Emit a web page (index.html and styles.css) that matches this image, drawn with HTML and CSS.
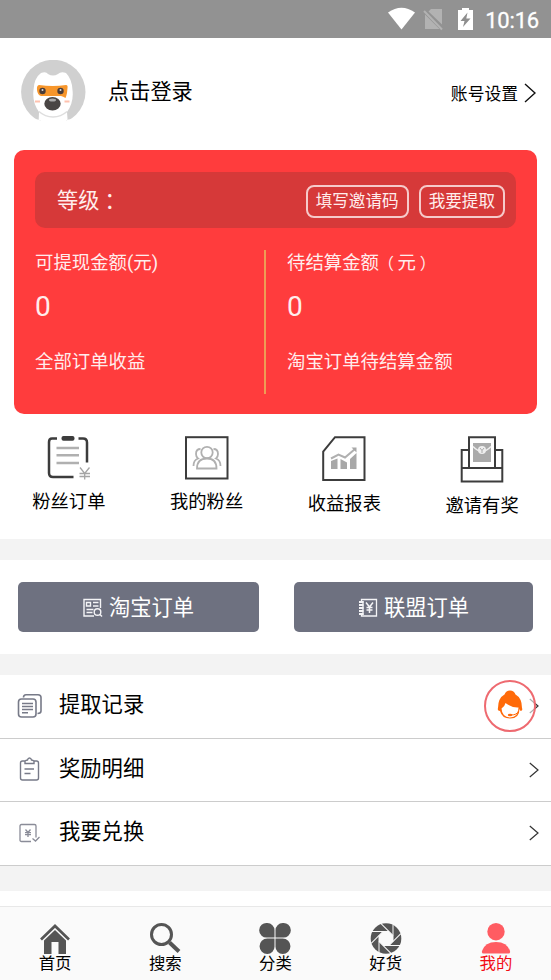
FILE: index.html
```html
<!DOCTYPE html>
<html lang="zh-CN">
<head>
<meta charset="utf-8">
<meta name="viewport" content="width=device-width, initial-scale=1">
<title>我的</title>
<link rel="stylesheet" href="styles.css">
</head>
<body>
<div class="app">
  <header class="status">
    <svg class="status-icons" width="92" height="26" viewBox="0 0 92 26">
      <path d="M1 6.500Q14.500-3 28 6.500L14.500 23.500Z" fill="#fff"/>
      <path d="M44 3h11v15.500L41.500 5.500zM38 8.500L52.500 23H38z" fill="#b2b2b2"/>
      <path d="M37 5L55 23.500" stroke="#b2b2b2" stroke-width="2"/>
      <path d="M71 4h4V2h7v2h4v20H71z" fill="#fff"/>
      <path d="M80.500 6.500L73.500 15h4L76 21l7.500-8.500h-4.200z" fill="#8e8e8e"/>
    </svg>
    <span class="clock">10:16</span>
  </header>

  <section class="profile">
    <svg class="avatar" width="65" height="65" viewBox="0 0 65 65">
      <clipPath id="disc"><path d="M0 0H65V59.500H47L45 61H20L17.500 59.500H0Z"/></clipPath>
      <g clip-path="url(#disc)">
        <circle cx="32.300" cy="32" r="32.200" fill="#d0d0d0"/>
        <path d="M18 52Q11 42 12.500 30Q13 18 20 13Q25 11 27 14Q32 17 37 14Q40 11 45 13Q51 19 51.500 30Q53 42 46 52L47 65H17.500Z" fill="#fff"/>
        <path d="M18 51.500Q24 57 32 57Q40 57 46 51.500" fill="none" stroke="#dedede" stroke-width="1.500"/>
      </g>
      <path d="M18 25Q32 27 45 25Q47 25 46.500 28L46 33Q45.500 35.500 44.500 38Q42 36.500 40 36H20Q16.500 35 16 30Q15.500 25.500 18 25Z" fill="#f7962b"/>
      <circle cx="21.500" cy="31" r="3.200" fill="#493c39"/><circle cx="39.500" cy="31" r="3.200" fill="#493c39"/>
      <circle cx="21.500" cy="30" r="1" fill="#ddd"/><circle cx="39.500" cy="30" r="1" fill="#ddd"/>
      <ellipse cx="31.500" cy="43.800" rx="8.200" ry="6.700" fill="#494544"/>
      <ellipse cx="31.500" cy="40" rx="3.500" ry="1.500" fill="#aaa"/>
      <path d="M14 41.500h5M43.500 41.500h5" stroke="#ffc1ae" stroke-width="2"/>
    </svg>
    <span class="login">点击登录</span>
    <span class="settings">账号设置</span>
    <svg width="12" height="20" viewBox="0 0 12 20"><path d="M1 1L11 10L1 19" fill="none" stroke="#111" stroke-width="1.400"/></svg>
  </section>

  <section class="card">
    <div class="level">
      <span class="level-name">等级<span class="colon">：</span></span>
      <button class="pill">填写邀请码</button>
      <button class="pill">我要提取</button>
    </div>
    <div class="amounts">
      <div class="amount">
        <p class="caption">可提现金额(元)</p>
        <p class="value">0</p>
        <p class="note">全部订单收益</p>
      </div>
      <div class="amount second">
        <p class="caption">待结算金额<span class="paren open">（</span>元<span class="paren close">）</span></p>
        <p class="value">0</p>
        <p class="note">淘宝订单待结算金额</p>
      </div>
    </div>
  </section>

  <nav class="quick">
    <a class="quick-item">
      <svg width="44" height="44" viewBox="0 0 44 44" fill="none">
        <path d="M10 2.500H5Q2 2.500 2 6V37Q2 41 6 41H26.500M31.500 2.500H36Q40 2.500 40 6.500V26.500" stroke="#3c3c3c" stroke-width="2.500"/>
        <rect x="14.500" y="0" width="13" height="4.800" rx="2" fill="#3c3c3c"/>
        <path d="M9.500 12h22.500M9.500 19.300h22.500M9.500 27h22.500" stroke="#b0b0b0" stroke-width="2.500"/>
        <path d="M33 31.500L37.700 37.500L42.500 31.500M37.700 37.500V43.500M32.500 37.500h10.500M32.500 40.500h10.500" stroke="#a5a5a5" stroke-width="1.300"/>
      </svg>
      <span>粉丝订单</span>
    </a>
    <a class="quick-item">
      <svg width="44" height="44" viewBox="0 0 44 44" fill="none">
        <rect x="1" y="1.200" width="41.500" height="41.300" stroke="#3c3c3c" stroke-width="2"/>
        <g stroke="#b0b0b0" stroke-width="1.800">
          <circle cx="22" cy="16.500" r="5.700"/>
          <path d="M12 32.500Q12 22.500 22 22.500Q31.500 22.500 31.500 32.500ZM15.500 13Q11 13 11 18Q11 21 13 22.500Q8.500 24 8.500 30M28.500 13Q33 13 33 18Q33 21 31 22.500Q35.500 24 35.500 30"/>
        </g>
      </svg>
      <span>我的粉丝</span>
    </a>
    <a class="quick-item">
      <svg width="44" height="46" viewBox="0 0 44 46" fill="none">
        <path d="M13 1.200H42.500V44H1.200V15.500Z" stroke="#3c3c3c" stroke-width="2"/>
        <path d="M9 25L15.500 22.500V33H9zM18.500 23L25 26.500V33H18.500zM28 23L34.500 17V33H28z" fill="#a8a8a8"/>
        <path d="M9 22.500L16.500 18.500L23 21.500L33 13" stroke="#b0b0b0" stroke-width="2"/>
        <path d="M29.500 11.500H34.500V16.500z" fill="#a8a8a8"/>
      </svg>
      <span>收益报表</span>
    </a>
    <a class="quick-item">
      <svg width="44" height="48" viewBox="0 0 44 48" fill="none">
        <path d="M9 31.500V1.200H35V31.500M9 14H1.700V45.500H42.300V14H35M2 32H42" stroke="#3c3c3c" stroke-width="2"/>
        <path d="M13 7H31V26H13z" fill="#aaa"/>
        <path d="M13 10.500Q22 20 31 10.500" stroke="#eee" stroke-width="1.500"/>
        <circle cx="22" cy="14" r="4" fill="#eee"/>
        <path d="M20 12L22 14.500L24 12M22 14.500V17" stroke="#aaa"/>
      </svg>
      <span>邀请有奖</span>
    </a>
  </nav>

  <section class="orders">
    <button class="order">
      <svg width="20" height="20" viewBox="0 0 20 20" fill="none" stroke="#f4f4f6" stroke-width="1.400">
        <path d="M17.500 10V1.500H1V18H11M3.500 4.500h4v3.500H3.500zM10 4.500h5.500M10 8h5.500M3.500 11.500h7M3.500 14.500h6"/>
        <circle cx="14.500" cy="14" r="3.300"/><path d="M17 16.500L19 18.500"/>
      </svg>
      <span>淘宝订单</span>
    </button>
    <button class="order">
      <svg width="20" height="20" viewBox="0 0 20 20" fill="none" stroke="#f4f4f6" stroke-width="1.300">
        <path d="M3.500 3V1.500H18.500V18H3.500V16.500M5 3V17"/>
        <path d="M1 4h4.500M1 7h4.500M1 10h4.500M1 13h4.500M1 16h4.500" stroke-width="2"/>
        <path d="M8 4.500L11.500 9L15 4.500M11.500 9V15M8.500 9.500h6M8.500 12h6" stroke-width="1.500"/>
      </svg>
      <span>联盟订单</span>
    </button>
  </section>

  <section class="list">
    <a class="row">
      <svg width="26" height="26" viewBox="0 0 26 26" fill="none" stroke="#777a88" stroke-width="1.600">
        <path d="M6.500 4.500Q6.500 1.800 9 1.800H21Q24 1.800 24 4.500V18Q24 20.500 20.500 20.500"/>
        <rect x="1.500" y="6" width="17.500" height="18" rx="3"/>
        <path d="M5 10.500h11M5 13.500h11M5 16.500h11M5 19.700h6"/>
      </svg>
      <span class="row-name">提取记录</span>
      <svg class="chevron" width="10" height="16" viewBox="0 0 10 16"><path d="M.800 1L9 8L.800 15"/></svg>
      <span class="service">
        <svg width="28" height="32" viewBox="0 0 28 32">
          <path d="M2 19Q2 9 8.500 5.500Q10 1.500 14 1.500Q18 1.500 19.500 5.500Q26 9 26 19Q27 21 25 22Q24 22 23.500 20Q23.500 29.500 14 29.500Q6 29.500 4 22Q1 22 2 19Z" fill="#ff6a09"/>
          <path d="M5.500 19.500Q8.500 18 9.500 14Q16 19 22.500 18.500Q22.500 28 14 28.500Q6 28 5.500 19.500Z" fill="#fff"/>
          <path d="M22.500 22Q21 26 15 26" fill="none" stroke="#ff6a09"/><ellipse cx="14" cy="26" rx="2.200" ry="1.200" fill="#ff6a09"/>
        </svg>
      </span>
    </a>
    <a class="row">
      <svg width="26" height="26" viewBox="0 0 26 26" fill="none" stroke="#777a88" stroke-width="1.400">
        <path d="M8 4H5.500Q3.500 4 3.500 6V21Q3.500 23 5.500 23H19.500Q21.500 23 21.500 21V6Q21.500 4 19.500 4H17M8 6.500V4Q9.500 3 10.500 3Q11 1 12.500 1Q14 1 14.500 3Q15.500 3 17 4V6.500ZM7.500 12h9.500M7.500 16.500h6"/>
      </svg>
      <span class="row-name">奖励明细</span>
      <svg class="chevron" width="10" height="16" viewBox="0 0 10 16"><path d="M.800 1L9 8L.800 15"/></svg>
    </a>
    <a class="row">
      <svg width="26" height="26" viewBox="0 0 26 26" fill="none" stroke="#8a8c98" stroke-width="1.300">
        <path d="M14 21.500H4.500Q3 21.500 3 20V6Q3 4.500 4.500 4.500H17.500Q19 4.500 19 6V17.500M15.500 18.500L18.500 21L22.500 17"/>
        <path d="M8.500 9.500L11 12.500L13.500 9.500M11 12.500V17M8 12.700h6M8 14.700h6"/>
      </svg>
      <span class="row-name">我要兑换</span>
      <svg class="chevron" width="10" height="16" viewBox="0 0 10 16"><path d="M.800 1L9 8L.800 15"/></svg>
    </a>
  </section>
  <div class="blank"></div>

  <nav class="tabs">
    <a class="tab">
      <svg width="32" height="32" viewBox="0 0 32 32"><path d="M2 17.500L16 4L30 17.500" fill="none" stroke="#555" stroke-width="2.700"/><path d="M5 18.500L16 8L27 18.500V32H19.500V20H12.500V32H5z" fill="#555"/></svg>
      <span>首页</span>
    </a>
    <a class="tab">
      <svg width="32" height="32" viewBox="0 0 32 32" fill="none" stroke="#555"><circle cx="12.500" cy="12.500" r="10" stroke-width="3"/><path d="M20.500 20.500L30 29.500" stroke-width="4"/></svg>
      <span>搜索</span>
    </a>
    <a class="tab">
      <svg width="32" height="32" viewBox="0 0 32 32" fill="#555"><path d="M8.300 1A7.300 7.300 0 1 0 8.300 15.500H15.500V8.300A7.200 7.200 0 0 0 8.300 1zM23.700 1A7.300 7.300 0 1 1 23.700 15.500H16.500V8.300A7.200 7.200 0 0 1 23.700 1zM8.300 32A7.300 7.300 0 1 1 8.300 16.500H15.500V24.500A7.200 7.200 0 0 1 8.300 32zM23.700 32A7.300 7.300 0 1 0 23.700 16.500H16.500V24.500A7.200 7.200 0 0 0 23.700 32z"/></svg>
      <span>分类</span>
    </a>
    <a class="tab">
      <svg width="32" height="32" viewBox="-16 -16.500 32 32">
        <defs><path id="blade" d="M3 -7H-14" stroke="#fafafa" stroke-width="1"/></defs>
        <circle r="15.300" fill="#555"/>
        <path d="M-3-7H3L7-3V3L3 7H-3L-7 3V-3Z" fill="#fafafa"/>
        <use href="#blade"/><use href="#blade" transform="rotate(45)"/><use href="#blade" transform="rotate(90)"/><use href="#blade" transform="rotate(135)"/>
        <use href="#blade" transform="rotate(180)"/><use href="#blade" transform="rotate(225)"/><use href="#blade" transform="rotate(270)"/><use href="#blade" transform="rotate(315)"/>
      </svg>
      <span>好货</span>
    </a>
    <a class="tab active">
      <svg width="32" height="32" viewBox="0 0 32 32" fill="#ff5c62"><circle cx="16" cy="9.700" r="8.700"/><path d="M3.500 31.500Q1.500 31.500 2 29Q5 20 16 20Q27 20 30 29Q30.500 31.500 28.500 31.500z"/></svg>
      <span>我的</span>
    </a>
  </nav>
</div>
</body>
</html>
```
FILE: styles.css
```css
* { box-sizing: border-box; }

body {
  margin: 0;
  background: #fff;
  color: #000;
  font-family: Roboto, "Noto Sans CJK SC", sans-serif;
}

p { margin: 0; }
svg { display: block; flex: none; }

button {
  font: inherit;
  color: inherit;
  margin: 0;
  padding: 0;
}

.app {
  display: flex;
  flex-direction: column;
  width: 551px;
  height: 980px;
  overflow: hidden;
}

.status {
  display: flex;
  align-items: center;
  justify-content: flex-end;
  gap: 6px;
  height: 38px;
  padding: 0 12px 0 0;
  background: #929292;
  color: #fff;
}

.clock {
  font-size: 22px;
  line-height: 26px;
  letter-spacing: -.2px;
  padding-top: 3px;
  -webkit-text-stroke: .3px #fff;
}

.profile {
  display: flex;
  align-items: center;
  height: 112px;
  padding: 0 15px 3px 21px;
}

.login {
  margin: 0 0 2px 22px;
  font-size: 21.200px;
  line-height: 30px;
}

.settings {
  margin: 2px 6px 0 auto;
  font-size: 16.800px;
  line-height: 24px;
}

.card {
  height: 264px;
  margin: 0 14px;
  padding: 22px 21px 0;
  border-radius: 10px;
  background: #ff3c3d;
  color: #ffeded;
}

.level {
  display: flex;
  align-items: center;
  gap: 10px;
  height: 56px;
  padding: 3px 11px 0 22px;
  border-radius: 10px;
  background: #d63939;
}

.level-name {
  margin-right: auto;
  font-size: 21.200px;
  line-height: 30px;
  padding-bottom: 2px;
}

.colon {
  margin-left: 5px;
}

.paren { font-size: 16px; line-height: 0; }
.open { margin: 0 3.400px 0 -1px; }
.close { margin-left: 4px; }

.pill {
  height: 33px;
  padding: 1px 8px 0;
  border: 2px solid #f6caca;
  border-radius: 8px;
  background: none;
  font-size: 16.600px;
  line-height: 28px;
}

.amounts {
  display: grid;
  grid-template-columns: 231px 1fr;
  height: 144px;
  margin-top: 22px;
}

.amount:first-child { border-right: 2px solid #ee9c55; }
.second { padding-left: 21px; }

.caption, .note {
  font-size: 18.400px;
  line-height: 24px;
  white-space: nowrap;
}

.caption { padding-top: 1px; }

.value {
  margin: 16px 0 26px;
  font-size: 28px;
  line-height: 32px;
}

.note { padding-top: 1px; }

.quick {
  display: grid;
  grid-template-columns: repeat(4, 1fr);
  height: 125px;
  padding-top: 22px;
}

.quick-item {
  display: flex;
  flex-direction: column;
  align-items: center;
  gap: 10px;
  font-size: 18.300px;
  line-height: 24px;
}

.orders {
  display: grid;
  grid-template-columns: 241px 239px;
  gap: 35px;
  height: 136px;
  padding: 22px 18px;
  border: solid #f3f3f3;
  border-width: 21px 0;
}

.order {
  display: flex;
  align-items: center;
  justify-content: center;
  gap: 6px;
  height: 50px;
  padding-top: 2px;
  border: 0;
  border-radius: 5px;
  background: #6e7180;
  color: #fff;
  font-size: 21.300px;
  line-height: 30px;
}

.list {
  height: 216px;
  border-bottom: 25px solid #f3f3f3;
}

.row {
  position: relative;
  display: flex;
  align-items: center;
  height: 63.600px;
  padding: 0 12px 0 17px;
  border-bottom: 1.500px solid #ccc;
}

.row-name {
  margin: 0 auto 2px 16px;
  font-size: 21.300px;
  line-height: 30px;
}

.chevron {
  fill: none;
  stroke: #333;
  stroke-width: 1.200;
}

.service {
  position: absolute;
  top: 5px;
  right: 15px;
  display: grid;
  place-items: center;
  width: 52px;
  height: 52px;
  padding-bottom: 3px;
  border: 2px solid #ee6a70;
  border-radius: 50%;
  background: rgba(255, 255, 255, .6);
}

.blank { height: 15px; }

.tabs {
  display: grid;
  grid-template-columns: repeat(5, 1fr);
  height: 74px;
  padding-top: 15px;
  border-top: 1.500px solid #e8e8e8;
  background: #fafafa;
}

.tab {
  display: flex;
  flex-direction: column;
  align-items: center;
  gap: 1px;
  font-size: 16.400px;
  line-height: 18px;
}

.active { color: #f20d14; }
```
